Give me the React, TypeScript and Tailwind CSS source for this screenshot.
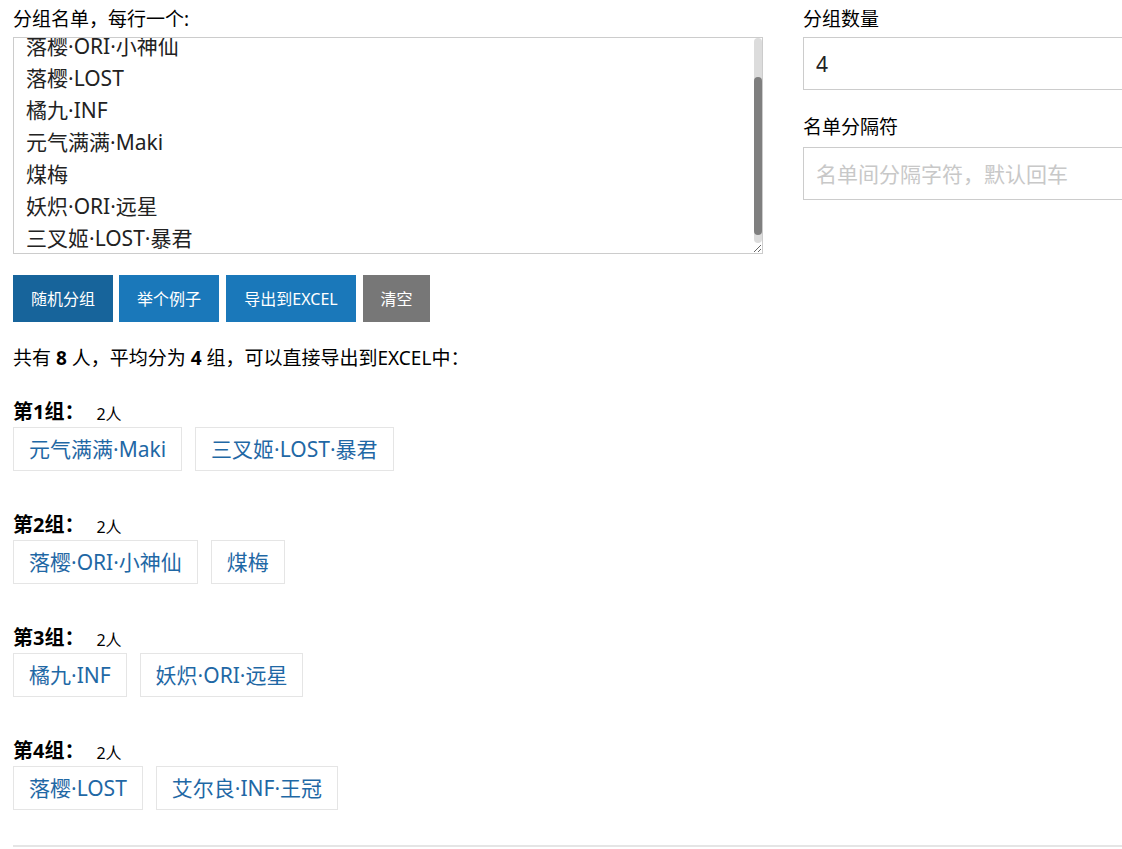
import { useEffect, useRef } from "react";

const names = [
  "艾尔良·INF·王冠",
  "落樱·ORI·小神仙",
  "落樱·LOST",
  "橘九·INF",
  "元气满满·Maki",
  "煤梅",
  "妖炽·ORI·远星",
  "三叉姬·LOST·暴君",
];

const groups = [
  ["元气满满·Maki", "三叉姬·LOST·暴君"],
  ["落樱·ORI·小神仙", "煤梅"],
  ["橘九·INF", "妖炽·ORI·远星"],
  ["落樱·LOST", "艾尔良·INF·王冠"],
];

const font = { fontFamily: '"Noto Sans", "Noto Sans CJK SC", sans-serif' };

const App = () => {
  const ta = useRef<HTMLTextAreaElement>(null);

  useEffect(() => {
    if (ta.current) ta.current.scrollTop = 46;
  }, []);

  return (
    <div className="w-[1122px] overflow-hidden bg-white text-black" style={font}>
      <div className="pl-[13px]">
        <div className="flex gap-[40px]">
          <div className="w-[750px] shrink-0">
            <div className="h-[37px] pt-[6px] text-[19px] leading-[26px]">分组名单，每行一个:</div>
            <div className="relative">
              <textarea
                ref={ta}
                spellCheck={false}
                defaultValue={names.join("\n")}
                className="block h-[217px] w-[750px] resize-y overflow-hidden border border-[#cccccc] py-[6px] pl-[12px] pr-[14px] text-[21px] leading-[32px] text-[#222] outline-none"
                style={font}
              />
              {/* scrollbar */}
              <div className="pointer-events-none absolute right-[1px] top-[1px] h-[205px] w-[8px] rounded-full bg-[#dcdcdc]">
                <div className="mt-[39px] h-[158px] w-[8px] rounded-full bg-[#7f7f7f]" />
              </div>
            </div>
          </div>
          <div className="w-[360px] shrink-0">
            <div className="h-[37px] pt-[6px] text-[19px] leading-[26px]">分组数量</div>
            <input
              defaultValue="4"
              className="block h-[53px] w-[360px] border border-[#cccccc] px-[12px] text-[21px] text-[#222] outline-none"
              style={font}
            />
            <div className="mt-[20px] h-[37px] pt-[4px] text-[19px] leading-[26px]">名单分隔符</div>
            <input
              placeholder="名单间分隔字符，默认回车"
              className="block h-[53px] w-[360px] border border-[#cccccc] px-[12px] text-[21px] text-[#222] outline-none placeholder:text-[#c8c8c8]"
              style={font}
            />
          </div>
        </div>

        <div className="mt-[21px] flex gap-[6px] text-[16px] text-white">
          <button className="h-[47px] w-[100px] bg-[#17649b]">随机分组</button>
          <button className="h-[47px] w-[100px] bg-[#1a78ba]">举个例子</button>
          <button className="ml-[1px] h-[47px] w-[130px] bg-[#1a78ba]">导出到EXCEL</button>
          <button className="ml-[1px] h-[47px] w-[67px] bg-[#777777]">清空</button>
        </div>

        <div className="mt-[24px] text-[19px] leading-[24px]">
          共有 <b>8</b> 人，平均分为 <b>4</b> 组，可以直接导出到EXCEL中：
        </div>

        <div className="mt-[27px]">
          {groups.map((g, i) => (
            <div key={i} className="mb-[39px]">
              <div className="flex h-[30px] items-center">
                <span className="text-[20px] font-bold leading-[30px]">第{i + 1}组：</span>
                <span className="ml-[12px] mt-[3px] text-[16px] leading-[24px]">2人</span>
              </div>
              <div className="flex gap-[13px]">
                {g.map((n) => (
                  <span
                    key={n}
                    className="h-[44px] border border-[#e5e5e5] px-[15px] text-[21px] leading-[42px] text-[#1f68a5]"
                  >
                    {n}
                  </span>
                ))}
              </div>
            </div>
          ))}
        </div>

        <div className="mt-[-4px] border-t-2 border-[#e5e5e5]" />
      </div>
    </div>
  );
};

export default App;
